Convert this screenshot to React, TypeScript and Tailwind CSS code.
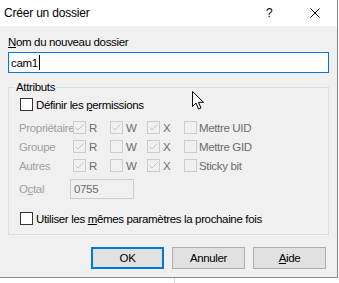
import React from 'react';

function Box({ checked, disabled }: { checked?: boolean; disabled?: boolean }) {
  return (
    <span
      className={`w-[13px] h-[13px] shrink-0 border flex items-center justify-center ${
        disabled ? 'border-[#cccccc] bg-[#f0f0f0]' : 'border-[#333333] bg-white'
      }`}
    >
      {checked && (
        <svg width="11" height="11" viewBox="0 0 11 11">
          <path d="M1.5 5.5 L4 8 L9.5 2.5" stroke="#c4c4c4" fill="none" strokeWidth="1" />
        </svg>
      )}
    </span>
  );
}

function Perm({ checked, letter }: { checked: boolean; letter: string }) {
  return (
    <div className="w-[37px] flex items-center">
      <Box checked={checked} disabled />
      <span className="ml-[3px] text-[#6d6d6d]">{letter}</span>
    </div>
  );
}

const rows = [
  { label: 'Propriétaire', r: true, w: true, x: true, extra: 'Mettre UID' },
  { label: 'Groupe', r: true, w: false, x: true, extra: 'Mettre GID' },
  { label: 'Autres', r: true, w: false, x: true, extra: 'Sticky bit' },
];

function Button({ children, focused }: { children: React.ReactNode; focused?: boolean }) {
  return (
    <button
      className={`w-[73px] h-[22px] bg-[#e1e1e1] text-black flex items-center justify-center ${
        focused ? 'border-2 border-[#0078d7]' : 'border border-[#adadad]'
      }`}
    >
      {children}
    </button>
  );
}

export default function App() {
  return (
    <div className="w-[339px] h-[283px] bg-white relative overflow-hidden text-[11.5px] tracking-[-0.35px] leading-[16px] text-black font-['Liberation_Sans',Arial,sans-serif]">
      <div className="w-[338px] h-[278px] bg-[#f0f0f0] border-r border-b border-[#8a8a8a] flex flex-col">
        {/* Title bar */}
        <div className="h-[26px] bg-white flex items-center pl-[4px] shrink-0">
          <span className="flex-1 text-[12px] tracking-[-0.2px]">Créer un dossier</span>
          <span className="w-[6px] mr-[38px] text-[12px]">?</span>
          <svg width="10" height="10" viewBox="0 0 10 10" className="mr-[17px]">
            <path d="M0.5 0.5 L9.5 9.5 M9.5 0.5 L0.5 9.5" stroke="#000" strokeWidth="1" />
          </svg>
        </div>

        <div className="px-[8px] flex flex-col">
          <div className="mt-[8px] h-[16px]">
            <u>N</u>om du nouveau dossier
          </div>
          <div className="mt-[2px] h-[21px] bg-white border border-[#0078d7] flex items-center pl-[2px]">
            <span>cam1</span>
            <span className="w-[1px] h-[15px] bg-black ml-[1px]" />
          </div>

          <fieldset className="mt-[6px] border border-[#dcdcdc] pl-[11px] pb-[6px] min-w-0">
            <legend className="ml-[-5px] px-[1px]">Attributs</legend>
            <div className="h-[19px] flex items-center">
              <Box />
              <span className="ml-[3px]">
                Définir les <u>p</u>ermissions
              </span>
            </div>

            <div className="mt-[4px] flex flex-col">
              {rows.map((row) => (
                <div key={row.label} className="h-[19px] flex items-center">
                  <span className="w-[54px] ml-[-1px] text-[#a0a0a0] whitespace-nowrap">{row.label}</span>
                  <Perm checked={row.r} letter="R" />
                  <Perm checked={row.w} letter="W" />
                  <Perm checked={row.x} letter="X" />
                  <Box disabled />
                  <span className="ml-[2px] text-[#6d6d6d]">{row.extra}</span>
                </div>
              ))}
            </div>

            <div className="mt-[4px] h-[20px] flex items-center">
              <span className="w-[51px] ml-[-1px] text-[#a0a0a0]">
                O<u>c</u>tal
              </span>
              <div className="w-[64px] h-[20px] border border-[#cccccc] bg-[#f0f0f0] flex items-center pl-[3px] text-[#6d6d6d]">
                0755
              </div>
            </div>

            <div className="mt-[10px] h-[19px] flex items-center">
              <Box />
              <span className="ml-[3px]">
                Utiliser les <u>m</u>êmes paramètres la prochaine fois
              </span>
            </div>
          </fieldset>

          <div className="mt-[12px] flex justify-end gap-[8px] pr-[3px]">
            <Button focused>OK</Button>
            <Button>Annuler</Button>
            <Button>
              <span>
                <u>A</u>ide
              </span>
            </Button>
          </div>
        </div>
      </div>
      <div className="h-[5px] flex">
        <div className="w-[175px] h-full border-r border-[#d9d9d9]" />
      </div>

      {/* mouse pointer */}
      <svg width="13" height="20" viewBox="0 0 13 20" className="absolute left-[192px] top-[91px]">
        <path
          d="M0.5 0.5 L0.5 15.5 L4 12 L6.5 18 L9 17 L6.5 11.3 L11.5 11.3 Z"
          fill="#fff"
          stroke="#000"
          strokeWidth="1"
          strokeLinejoin="miter"
        />
      </svg>
    </div>
  );
}
